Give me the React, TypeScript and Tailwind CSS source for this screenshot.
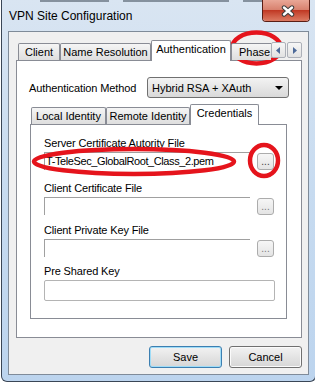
const font = "font-['Liberation_Sans',Arial,sans-serif]";

function Tab({ label, w, active }: { label: string; w: string; active?: boolean }) {
  if (active) {
    return (
      <div className={`${w} h-[21px] shrink-0 border border-b-0 border-[#898c95] rounded-t-[2px] bg-white pt-[1px] text-center text-[11px] leading-[14px] text-black whitespace-nowrap`}>
        {label}
      </div>
    );
  }
  return (
    <div className={`${w} h-[17px] mb-[1px] shrink-0 border border-b-0 border-[#898c95] rounded-t-[2px] bg-linear-to-b from-[#f5f5f5] to-[#dedede] pt-[1px] text-center text-[11px] leading-[14px] text-black whitespace-nowrap overflow-hidden`}>
      {label}
    </div>
  );
}

function Arrow({ dir }: { dir: "left" | "right" }) {
  return (
    <div className="w-[15px] h-[16px] border border-[#acb0b8] rounded-[2px] bg-linear-to-b from-[#f7f7f7] to-[#e2e2e2] flex items-center justify-center">
      <svg width="5" height="7" viewBox="0 0 5 7">
        {dir === "left" ? <path d="M4 0 L0 3.5 L4 7 Z" fill="#4d6a99" /> : <path d="M1 0 L5 3.5 L1 7 Z" fill="#4d6a99" />}
      </svg>
    </div>
  );
}

function Browse({ dark }: { dark?: boolean }) {
  return (
    <div className={`w-[17px] h-[17px] shrink-0 border border-[#acacac] rounded-[3px] bg-linear-to-b from-[#f6f6f6] to-[#e4e4e4] flex items-end justify-center pb-[3px] text-[10px] leading-[8px] ${dark ? "text-[#3a3a3a]" : "text-[#7a7a7a]"}`}>
      ...
    </div>
  );
}

function FileField({ value }: { value?: string }) {
  return (
    <div className="flex items-start gap-[7px]">
      <div className="w-[206px] h-[18px] border-t border-l border-[#a0a0a0] bg-white pl-[1px] text-[11px] leading-[17px] tracking-[-0.4px] text-black whitespace-nowrap overflow-hidden">
        {value}
      </div>
      <div className="mt-[1px]">
        <Browse dark={!!value} />
      </div>
    </div>
  );
}

function Label({ text }: { text: string }) {
  return <div className="h-[14px] text-[11px] leading-[14px] tracking-[-0.15px] text-black whitespace-nowrap">{text}</div>;
}

function Button({ label, primary }: { label: string; primary?: boolean }) {
  return (
    <div
      className={`w-[73px] h-[22px] rounded-[3px] border flex items-center justify-center text-[11px] text-black ${
        primary
          ? "border-[#3c7fb1] shadow-[inset_0_0_0_1px_#9fdcf7] bg-linear-to-b from-[#f2f2f2] to-[#d6d6d6]"
          : "border-[#707070] shadow-[inset_0_0_0_1px_#fbfbfb] bg-linear-to-b from-[#f2f2f2] to-[#d6d6d6]"
      }`}
    >
      {label}
    </div>
  );
}

export default function App() {
  return (
    <div className={`relative w-[315px] h-[383px] overflow-hidden bg-white ${font}`}>
      <div className="ml-[1px] w-[315px] border-l border-r border-b border-[#3a4656] rounded-b-[6px] bg-linear-to-b from-[#d9e5f2] via-[#c7dbf0] to-[#bcd4ee]">
        {/* title bar */}
        <div className="h-[31px] flex">
          <div className="flex-1 min-w-0 flex flex-col">
            {/* blurred background showing through the glass */}
            <div className="h-[4px] flex items-start gap-[14px] pl-[38px] blur-[0.7px] opacity-60">
              <div className="w-[72px] h-[2px] bg-[#4e5a68]" />
              <div className="w-[110px] h-[2px] bg-[#4e5a68]" />
              <div className="w-[20px] h-[2px] bg-[#4e5a68]" />
            </div>
            <div className="mt-[5px] pl-[7px] text-[12px] leading-[15px] text-black whitespace-nowrap">
              VPN Site Configuration
            </div>
          </div>
          <div className="w-[48px] h-[22px] mr-[5px] shrink-0 grid border border-t-0 border-[#5a1e15] rounded-b-[4px] overflow-hidden">
            <div className="col-start-1 row-start-1 flex flex-col">
              <div className="h-[10px] bg-linear-to-b from-[#e9a797] to-[#d7806d]" />
              <div className="flex-1 bg-linear-to-b from-[#bf3520] to-[#dc7a62]" />
            </div>
            <div className="col-start-1 row-start-1 flex items-center justify-center pl-[3px]">
              <svg width="14" height="12" viewBox="0 0 14 12">
                <path d="M3 2.5 L11 9.5 M11 2.5 L3 9.5" stroke="#3d3d3d" strokeWidth="4.4" strokeLinecap="round" />
                <path d="M3 2.5 L11 9.5 M11 2.5 L3 9.5" stroke="#ffffff" strokeWidth="2.4" strokeLinecap="round" />
              </svg>
            </div>
          </div>
        </div>

        {/* client area */}
        <div className="mx-[6px] mb-[6px] border border-[#7f8b99] bg-[#f0f0f0]">
          <div className="h-[342px] flex flex-col pt-[8px]">
            {/* outer tabs */}
            <div className="relative z-10 ml-[7px] w-[286px] h-[21px] flex">
              <div className="flex-1 min-w-0 overflow-hidden flex items-end pl-[2px]">
                <Tab label="Client" w="w-[42px]" />
                <Tab label="Name Resolution" w="w-[91px]" />
                <Tab label="Authentication" w="w-[80px]" active />
                <div className="w-[60px] h-[17px] mb-[1px] shrink-0 border border-b-0 border-[#898c95] rounded-t-[2px] bg-linear-to-b from-[#f5f5f5] to-[#dedede] pt-[1px] pl-[7px] text-[11px] leading-[14px] text-black whitespace-nowrap">
                  Phase
                </div>
              </div>
              <div className="w-[31px] mt-[2px] flex gap-[1px]">
                <Arrow dir="left" />
                <Arrow dir="right" />
              </div>
            </div>
            <div className="-mt-[1px] ml-[7px] w-[286px] h-[278px] border border-[#898c95] bg-white pt-[16px]">
              <div className="flex items-center justify-between pl-[12px] pr-[12px]">
                <div className="text-[11px] leading-[14px] tracking-[-0.1px] text-black">Authentication Method</div>
                <div className="w-[142px] h-[21px] border border-[#707070] rounded-[3px] bg-linear-to-b from-[#f3f3f3] to-[#d9d9d9] flex items-center justify-between pl-[4px] pr-[5px]">
                  <span className="text-[11px] leading-[14px] text-black whitespace-nowrap">Hybrid RSA + XAuth</span>
                  <svg width="8" height="4" viewBox="0 0 8 4">
                    <path d="M0 0 L8 0 L4 4 Z" fill="#000" />
                  </svg>
                </div>
              </div>

              {/* inner tabs */}
              <div className="relative z-10 mt-[6px] ml-[13px] w-[257px] h-[21px] flex items-end pl-[1px]">
                <Tab label="Local Identity" w="w-[75px]" />
                <Tab label="Remote Identity" w="w-[84px]" />
                <Tab label="Credentials" w="w-[69px]" active />
              </div>
              <div className="-mt-[1px] ml-[13px] w-[257px] h-[195px] border border-[#898c95] bg-white pt-[11px] pl-[13px] flex flex-col">
                <Label text="Server Certificate Autority File" />
                <div className="mt-[2px]">
                  <FileField value="T-TeleSec_GlobalRoot_Class_2.pem" />
                </div>
                <div className="mt-[11px]">
                  <Label text="Client Certificate File" />
                </div>
                <div className="mt-[2px]">
                  <FileField />
                </div>
                <div className="mt-[8px]">
                  <Label text="Client Private Key File" />
                </div>
                <div className="mt-[2px]">
                  <FileField />
                </div>
                <div className="mt-[7px]">
                  <Label text="Pre Shared Key" />
                </div>
                <div className="mt-[2px] w-[231px] h-[21px] border border-[#b4b4b4] rounded-[2px] bg-white" />
              </div>
            </div>

            {/* buttons */}
            <div className="mt-[8px] pr-[6px] flex justify-end gap-[7px]">
              <Button label="Save" primary />
              <Button label="Cancel" />
            </div>
          </div>
        </div>
      </div>

      {/* red annotation marks */}
      <svg className="absolute inset-0 pointer-events-none" width="315" height="383" viewBox="0 0 315 383">
        <ellipse cx="256.5" cy="48" rx="24.5" ry="15.5" fill="none" stroke="#e5141c" strokeWidth="4.5" />
        <ellipse cx="134" cy="161.5" rx="100" ry="12.5" fill="none" stroke="#e5141c" strokeWidth="4.5" />
        <ellipse cx="264" cy="160.5" rx="14" ry="15.5" fill="none" stroke="#e5141c" strokeWidth="4.5" />
      </svg>
    </div>
  );
}
